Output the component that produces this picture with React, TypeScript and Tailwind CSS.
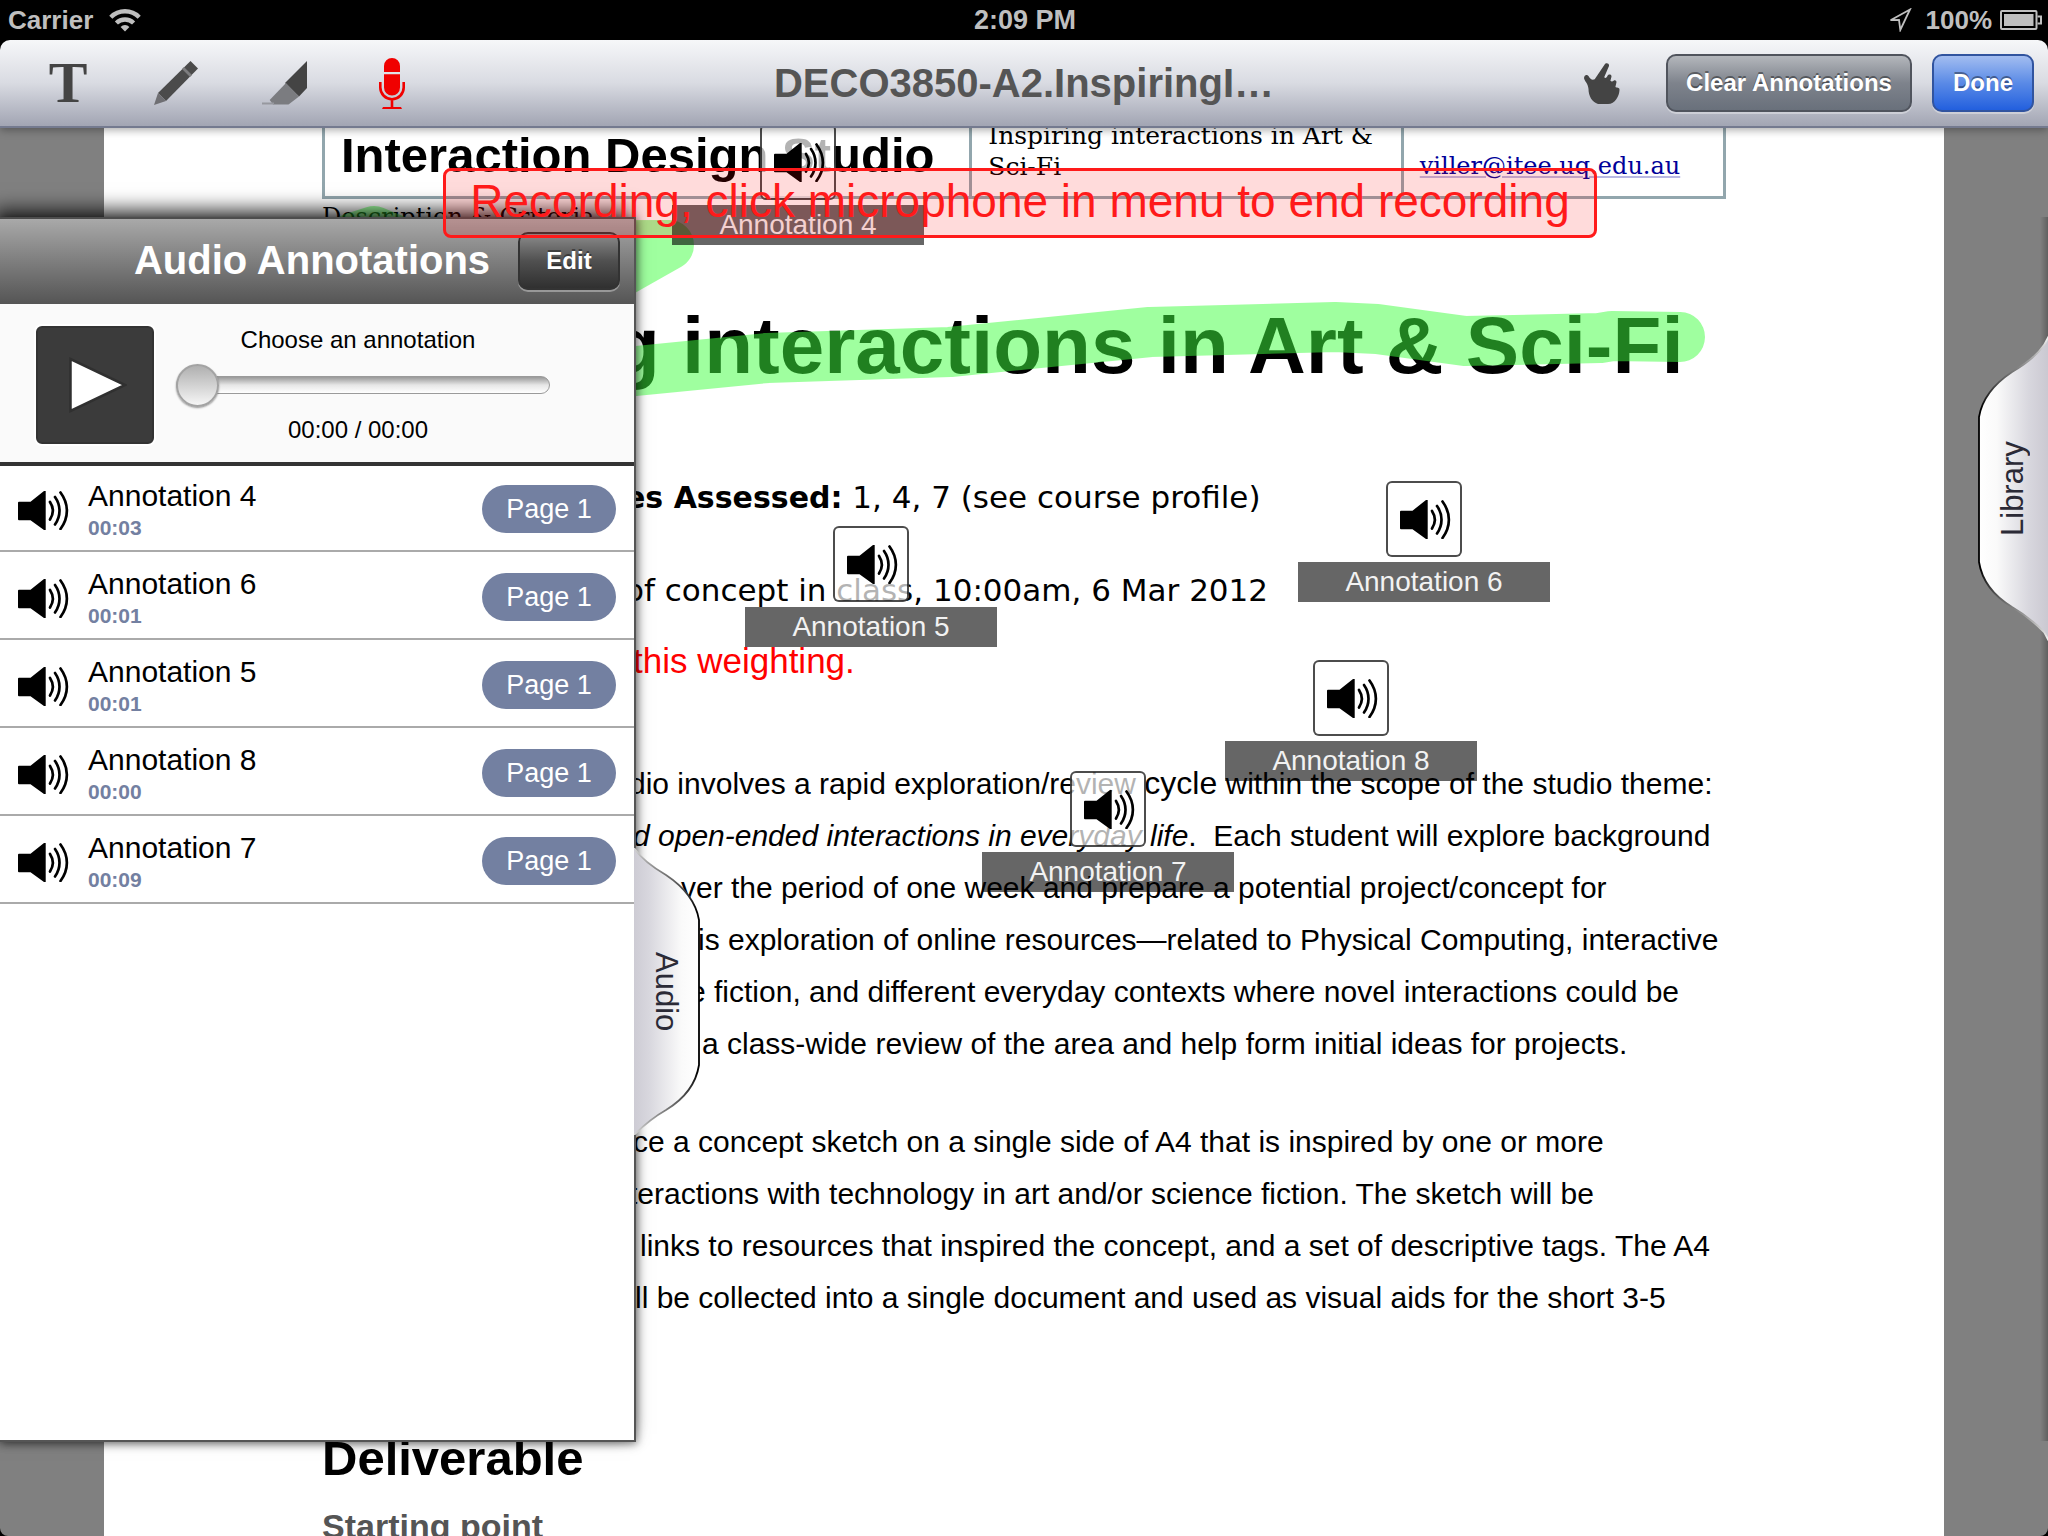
import { useState } from "react";
import type { ReactNode } from "react";

type Annotation = { name: string; length: string; page: number; pin: string };

const annotations: Annotation[] = [
  { name: "Annotation 4", length: "00:03", page: 1, pin: "left-[672px] top-[-4px]" },
  { name: "Annotation 6", length: "00:01", page: 1, pin: "left-[1298px] top-[353px]" },
  { name: "Annotation 5", length: "00:01", page: 1, pin: "left-[745px] top-[398px]" },
  { name: "Annotation 8", length: "00:00", page: 1, pin: "left-[1225px] top-[532px]" },
  { name: "Annotation 7", length: "00:09", page: 1, pin: "left-[982px] top-[643px]" },
];

function WifiIcon() {
  return (
    <svg viewBox="0 0 32 24" className="h-6 w-8" fill="none" stroke="#bfbfbf" strokeWidth="4.4" aria-hidden="true">
      <path d="M1.8 9.2a20 20 0 0 1 28.4 0" />
      <path d="M7.4 15a12.2 12.2 0 0 1 17.2 0" />
      <path d="M16 23.5l-4.4-4.6a6.3 6.3 0 0 1 8.8 0z" fill="#bfbfbf" stroke="none" />
    </svg>
  );
}

function LocationIcon() {
  return (
    <svg viewBox="0 0 24 24" className="h-6 w-6" fill="none" stroke="#bfbfbf" strokeWidth="1.8" aria-hidden="true">
      <path d="M22 1.5L2.5 12.2l8.5-.2 1.300 10z" />
    </svg>
  );
}

function BatteryIcon() {
  return (
    <svg viewBox="0 0 42 20" className="h-5 w-[42px]" aria-hidden="true">
      <rect x="1" y="1" width="35.500" height="18" rx="1" fill="none" stroke="#bfbfbf" strokeWidth="2" />
      <rect x="4" y="4" width="29.500" height="12" fill="#bfbfbf" />
      <path d="M37.500 6.500h3.500v7h-3.500" fill="none" stroke="#bfbfbf" strokeWidth="2" />
    </svg>
  );
}

function PencilIcon() {
  return (
    <svg viewBox="0 0 44 44" className="size-11" aria-hidden="true">
      <path d="M4 32L36.500 0 44 7.500 12 40z" fill="#4b4b4b" />
      <path d="M28 8l2-2 8 8-2 2z" fill="#7d7d7f" />
      <path d="M4 32l8 8L0 44z" fill="#6f6f73" />
    </svg>
  );
}

function HighlighterIcon() {
  return (
    <svg viewBox="0 0 45 44" className="h-11 w-[45px]" aria-hidden="true">
      <path d="M45 0v27l-8 8.500L23 22z" fill="#444" />
      <path d="M24 22l13 13.500L26.500 43.500H11L7.700 39z" fill="#7b7c80" />
      <path d="M0 41.500h12v2H0z" fill="#97989f" />
    </svg>
  );
}

function MicIcon() {
  return (
    <svg viewBox="0 0 26 51" className="h-[51px] w-[26px]" aria-hidden="true">
      <path d="M5 14V8a8 8 0 0 1 16 0v6zM5 16.200h16V29.500a8 8 0 0 1-16 0z" fill="#f00000" />
      <path d="M1.300 24v5.500a11.700 11.700 0 0 0 23.400 0V24M13 41v9" fill="none" stroke="#f00000" strokeWidth="2.600" />
      <path d="M4 49h18l1 2H3z" fill="#f00000" />
    </svg>
  );
}

function HandIcon() {
  return (
    <svg viewBox="0 0 36 41" className="h-[41px] w-9" fill="#444" aria-hidden="true">
      <path d="M20.500 1.700C21.800-.6 25.500.2 25 3L20.200 14.300c1.500 1.200 2.300.7 3.300-1.500 1.200-2.200 4.600-1.400 3.900 1.200l-1 3.700c1 1.300 2.400.8 3.200.1 1.500-1.300 3.400 0 2.700 2.200l-.9 4c1 1.300 4.200-.4 4.100 3C35.300 33 31 41 24 41H14C8 39 4.500 33 4.500 26 4 20 .5 18.500 0 15c.3-3.500 3.500-4 5-1.200 1.200 2.200 3 3.500 5.700 2.500z" />
    </svg>
  );
}

function SpeakerIcon() {
  return (
    <svg viewBox="0 0 51 39" className="h-[39px] w-[51px] shrink-0" aria-hidden="true">
      <path d="M1 10.700h11.500L26 0h1.700v39H26L12.500 29.300H1a1 1 0 0 1-1-1V11.700a1 1 0 0 1 1-1z" />
      <g fill="none" stroke="#000" strokeWidth="2.700" strokeLinecap="round">
        <path d="M32 11c3.600 5.500 3.600 12 0 17.500" />
        <path d="M37 6c6 8.500 6 19 0 27.500" />
        <path d="M42.500 1.500c8.500 11.500 8.500 25 0 36.500" />
      </g>
    </svg>
  );
}

function ToolButton({ label, children }: { label: string; children: ReactNode }) {
  return (
    <button type="button" aria-label={label} className="flex h-full w-[108px] items-center justify-center">
      {children}
    </button>
  );
}

const buttonBase =
  "h-[58px] rounded-[10px] border-2 text-2xl font-bold text-white shadow-[0_2px_0_rgba(255,255,255,0.35)] [text-shadow:0_-2px_0_rgba(0,0,0,0.4)]";

function TabShape({ id, wide }: { id: string; wide?: boolean }) {
  return (
    <svg
      viewBox={wide ? "-4 -10 70 307" : "0 0 66 287"}
      className={wide ? "h-[307px] w-[70px] -scale-x-100" : "h-[287px] w-[66px]"}
      aria-hidden="true"
    >
      <defs>
        <linearGradient id={`${id}-fill`} x1="0" x2="1">
          <stop offset="0" stopColor="#c9c7d0" />
          <stop offset="0.300" stopColor="#d8d7de" />
          <stop offset="0.750" stopColor="#fafafa" />
          <stop offset="1" stopColor="#fff" />
        </linearGradient>
        <linearGradient id={`${id}-edge`} x1="0" y1="0" x2="0" y2="1">
          <stop offset="0" stopColor="#fff" />
          <stop offset="0.120" stopColor="#777" />
          <stop offset="0.240" stopColor="#000" />
          <stop offset="0.760" stopColor="#000" />
          <stop offset="0.880" stopColor="#777" />
          <stop offset="1" stopColor="#fff" />
        </linearGradient>
      </defs>
      <path
        d="M-6-11C-3-6-2-3 0 0C8 12 20 20 32 27C50 39 62 54 65 72V217C62 236 50 251 32 262C18 270 8 279 0 287C-2 290-3 293-6 298"
        fill={`url(#${id}-fill)`}
        stroke={`url(#${id}-edge)`}
        strokeWidth="1.800"
      />
    </svg>
  );
}

function StatusBar() {
  return (
    <header className="grid h-10 shrink-0 grid-cols-3 items-center pr-1.5 pl-2 text-[26px] leading-10 font-bold text-[#bfbfbf]">
      <div className="flex items-center gap-4">
        <span>Carrier</span>
        <WifiIcon />
      </div>
      <time className="text-center text-[27px]">2:09 PM</time>
      <div className="flex items-center justify-end">
        <LocationIcon />
        <span className="mr-2 ml-3.5">100%</span>
        <BatteryIcon />
      </div>
    </header>
  );
}

function Toolbar() {
  return (
    <nav className="relative z-10 grid h-[88px] shrink-0 grid-cols-[1fr_auto_1fr] items-center rounded-t-[10px] border-b-2 border-[#747a8f] bg-linear-to-b from-[#f6f7f9] via-[#d9dbe2] to-[#a2a5b3] shadow-[0_2px_8px_rgba(0,0,0,0.35)]">
      <div className="flex h-full items-center pl-3.5">
        <ToolButton label="Text">
          <span className="font-['Liberation_Serif',serif] text-[58px] leading-none font-bold text-[#444]">T</span>
        </ToolButton>
        <ToolButton label="Pencil">
          <PencilIcon />
        </ToolButton>
        <ToolButton label="Highlighter">
          <HighlighterIcon />
        </ToolButton>
        <ToolButton label="Record audio">
          <MicIcon />
        </ToolButton>
      </div>
      <h1 className="text-[40px] leading-[86px] font-bold text-[#555]">DECO3850-A2.InspiringI…</h1>
      <div className="flex items-center justify-end gap-5 pr-3.5">
        <button type="button" aria-label="Pan" className="mr-[26px]">
          <HandIcon />
        </button>
        <button
          type="button"
          className={`${buttonBase} w-[246px] border-[#50545d] bg-linear-to-b from-[#b4b7bc] via-[#7e838c] to-[#69707b]`}
        >
          Clear Annotations
        </button>
        <button
          type="button"
          className={`${buttonBase} w-[102px] border-[#31549f] bg-linear-to-b from-[#a3bdf0] via-[#5a8ae6] to-[#225fde]`}
        >
          Done
        </button>
      </div>
    </nav>
  );
}

function DocumentPage() {
  return (
    <article className="mx-[104px] h-full bg-white px-[218px] text-black">
      <div className="-mt-2 inline-block w-full align-top">
        <table className="w-full table-fixed border-separate border-spacing-0 border-b-3 border-l-3 border-[#92a6ad] font-['DejaVu_Serif',serif] text-2xl leading-[31px]">
          <tbody>
            <tr className="h-[76px] align-top">
              <td className="w-[46.2%] border-r-3 border-[#92a6ad] pt-2 pl-4 font-['Liberation_Sans',sans-serif] text-[49px] leading-[54px] font-bold whitespace-nowrap">
                Interaction Design Studio
              </td>
              <td className="w-[30.8%] border-r-3 border-[#92a6ad] pl-4 text-[25px] whitespace-nowrap">
                Inspiring interactions in Art &
                <br />
                Sci-Fi
              </td>
              <td className="w-[23%] border-r-3 border-[#92a6ad] pt-[31px] pl-4">
                <a href="mailto:viller@itee.uq.edu.au" className="text-[#000099] underline decoration-[#b9b9e3] decoration-2 underline-offset-2">
                  viller@itee.uq.edu.au
                </a>
              </td>
            </tr>
          </tbody>
        </table>
        <p className="font-['DejaVu_Serif',serif] text-2xl leading-9">Description &amp; Criteria</p>
        <h2 className="mt-[63px] text-[80px] leading-[96px] font-bold whitespace-nowrap">
          Inspiring interactions in Art &amp; Sci-Fi
        </h2>
        <div className="mt-[57px] pl-[303px] font-['DejaVu_Sans',sans-serif] text-[31px] leading-[93px] whitespace-nowrap">
          <p>
            <strong className="text-[30px]">es Assessed:</strong> 1, 4, 7 (see course profile)
          </p>
          <p>of concept in class, 10:00am, 6 Mar 2012</p>
        </div>
        <p className="pl-[311px] text-[35px] leading-[48px] text-[#ff0000]">this weighting.</p>
        <div className="mt-[72px] text-[30px] leading-[52px] whitespace-nowrap">
          <p className="pl-[307px]">
            dio involves a rapid exploration/review <span className="text-[32px]">cycle</span> within the scope of the
            studio theme:
          </p>
          <p className="pl-[311px]">
            <em>d open-ended interactions in everyday life</em>.&nbsp; Each student will explore background
          </p>
          <p className="pl-[359px]">ver the period of one week and prepare a potential project/concept for</p>
          <p className="pl-[376px]">is exploration of online resources—related to Physical Computing, interactive</p>
          <p className="pl-[367px]">e fiction, and different everyday contexts where novel interactions could be</p>
          <p className="pl-[380px]">a class-wide review of the area and help form initial ideas for projects.</p>
        </div>
        <div className="mt-[46px] text-[30px] leading-[52px] whitespace-nowrap">
          <p className="pl-[311px]">ce a concept sketch on a single side of A4 that is inspired by one or more</p>
          <p className="pl-[307px]">teractions with technology in art and/or science fiction. The sketch will be</p>
          <p className="pl-[318px]">links to resources that inspired the concept, and a set of descriptive tags. The A4</p>
          <p className="pl-[313px]">ll be collected into a single document and used as visual aids for the short 3-5</p>
        </div>
        <h3 className="mt-[104px] text-[49px] leading-[60px] font-bold">Deliverable</h3>
        <h4 className="mt-4 text-[34px] leading-[44px] font-bold text-[#555]">Starting point</h4>
      </div>
    </article>
  );
}

function HighlightStrokes() {
  return (
    <svg
      viewBox="0 128 2048 1408"
      className="pointer-events-none absolute top-0 left-0 h-[1408px] w-[2048px]"
      fill="none"
      stroke="#40ff40"
      strokeWidth="50"
      strokeLinecap="round"
      strokeLinejoin="round"
      aria-hidden="true"
    >
      <path opacity="0.500" d="M352 238L374 231 410 246 669 245 600 284" />
      <path
        opacity="0.500"
        d="M560 380L636 371 767 358 950 352 1150 332 1335 327 1377 329 1465 341 1600 338 1612 336 1680 337"
      />
    </svg>
  );
}

function Pin({ annotation }: { annotation: Annotation }) {
  return (
    <button type="button" className={`absolute flex w-[252px] flex-col items-center gap-[5px] ${annotation.pin}`}>
      <span className="flex size-[76px] items-center justify-center rounded-md border-2 border-black/70 bg-white/70 pl-0.5">
        <SpeakerIcon />
      </span>
      <span className="h-10 w-full bg-black/60 text-center text-[28px] leading-10 text-[#f2f2f2]">
        {annotation.name}
      </span>
    </button>
  );
}

function AudioPanel() {
  const [position, setPosition] = useState(0);
  return (
    <aside className="absolute top-[89px] left-0 flex h-[1225px] w-[636px] flex-col border-r-2 border-b-2 border-[#555] bg-white shadow-[-6px_-8px_18px_rgba(0,0,0,0.75),1px_2px_8px_rgba(0,0,0,0.45)]">
      <div className="grid h-[87px] shrink-0 grid-cols-[106px_1fr_102px] items-center border-t-2 border-[#4d4d4d] bg-linear-to-b from-[#a9a9a9] to-[#555] pr-3.5 pb-0.5">
        <h2 className="col-start-2 pb-0.5 text-center text-[40px] leading-[48px] font-bold whitespace-nowrap text-white">
          Audio Annotations
        </h2>
        <button
          type="button"
          className={`${buttonBase} border-[#333] bg-linear-to-b from-[#8c8c8c] via-[#505050] to-[#303030]`}
        >
          Edit
        </button>
      </div>

      <div className="flex shrink-0 items-center border-b-4 border-[#333] bg-[#fafafa] pt-[14px] pb-[10px] pl-9">
        <button
          type="button"
          aria-label="Play"
          className="flex size-[118px] items-center justify-center rounded-md border-2 border-[#333] bg-[#3b3b3b] ring-2 ring-white"
        >
          <svg viewBox="0 0 60 60" className="ml-1 size-[60px]" aria-hidden="true">
            <path d="M3.500 4v52L58 30z" fill="#fff" stroke="#303030" strokeWidth="2.500" />
          </svg>
        </button>
        <div className="ml-3 flex w-[384px] flex-col text-center text-2xl leading-[44px]">
          <label htmlFor="seek">Choose an annotation</label>
          <div className="flex h-[46px] items-center pl-[10px]">
            <input
              id="seek"
              type="range"
              min={0}
              max={100}
              value={position}
              onChange={(event) => setPosition(Number(event.target.value))}
              className="h-[18px] w-full appearance-none rounded-full border border-[#9a9a9a] bg-linear-to-b from-[#999] via-[#e6e6e6] to-white [&::-webkit-slider-thumb]:-ml-px [&::-webkit-slider-thumb]:size-[43px] [&::-webkit-slider-thumb]:appearance-none [&::-webkit-slider-thumb]:rounded-full [&::-webkit-slider-thumb]:border-2 [&::-webkit-slider-thumb]:border-[#a3a3a3] [&::-webkit-slider-thumb]:bg-linear-to-b [&::-webkit-slider-thumb]:from-[#b0b0b0] [&::-webkit-slider-thumb]:to-[#f6f6f6] [&::-webkit-slider-thumb]:shadow-[0_1px_2px_rgba(0,0,0,0.4)]"
            />
          </div>
          <span>00:00 / 00:00</span>
        </div>
      </div>

      <ul className="-mt-0.5">
        {annotations.map((item) => (
          <li key={item.name} className="flex h-[88px] items-center border-b-2 border-[#aaa] pt-1.5 pr-[18px] pl-[18px]">
            <SpeakerIcon />
            <div className="ml-[19px] flex-1">
              <p className="text-[30px] leading-9">{item.name}</p>
              <p className="text-[21px] leading-7 font-bold text-[#7380a1]">{item.length}</p>
            </div>
            <button
              type="button"
              className="mb-0.5 h-12 w-[134px] rounded-full bg-[#7380a1] text-[27px] leading-[48px] text-white"
            >
              Page {item.page}
            </button>
          </li>
        ))}
      </ul>
    </aside>
  );
}

export default function App() {
  return (
    <div className="flex h-screen flex-col overflow-hidden bg-black font-['Liberation_Sans',sans-serif]">
      <StatusBar />
      <Toolbar />
      <main className="relative min-h-0 flex-1 overflow-hidden rounded-b-lg bg-[#808080]">
        <DocumentPage />
        <HighlightStrokes />
        {annotations.map((item) => (
          <Pin key={item.name} annotation={item} />
        ))}
        <div className="pointer-events-none absolute top-[89px] right-0 h-[1224px] w-2 bg-linear-to-l from-black/25 to-transparent" />
        <button type="button" className="absolute top-[207px] right-0 flex items-center">
          <TabShape id="library" wide />
          <span className="absolute top-0 right-2 bottom-0 flex w-14 rotate-180 items-center justify-center text-[31px] leading-none text-[#2b2a36] [writing-mode:vertical-rl]">
            Library
          </span>
        </button>
        <AudioPanel />
        <button type="button" className="absolute top-[720px] left-[634px] flex items-center">
          <TabShape id="audio" />
          <span className="absolute top-0 bottom-0 left-1 flex w-14 items-center justify-center text-[31px] leading-none text-[#2b2a36] [writing-mode:vertical-rl]">
            Audio
          </span>
        </button>
        <div className="pointer-events-none absolute inset-x-0 top-10 flex justify-center pr-2">
          <p
            role="status"
            className="rounded-lg border-3 border-[#ff1a1a] bg-[#ff0000]/14 px-6 pb-1 text-[46px] leading-[60px] text-[#ff1a1a]"
          >
            Recording, click microphone in menu to end recording
          </p>
        </div>
      </main>
    </div>
  );
}
